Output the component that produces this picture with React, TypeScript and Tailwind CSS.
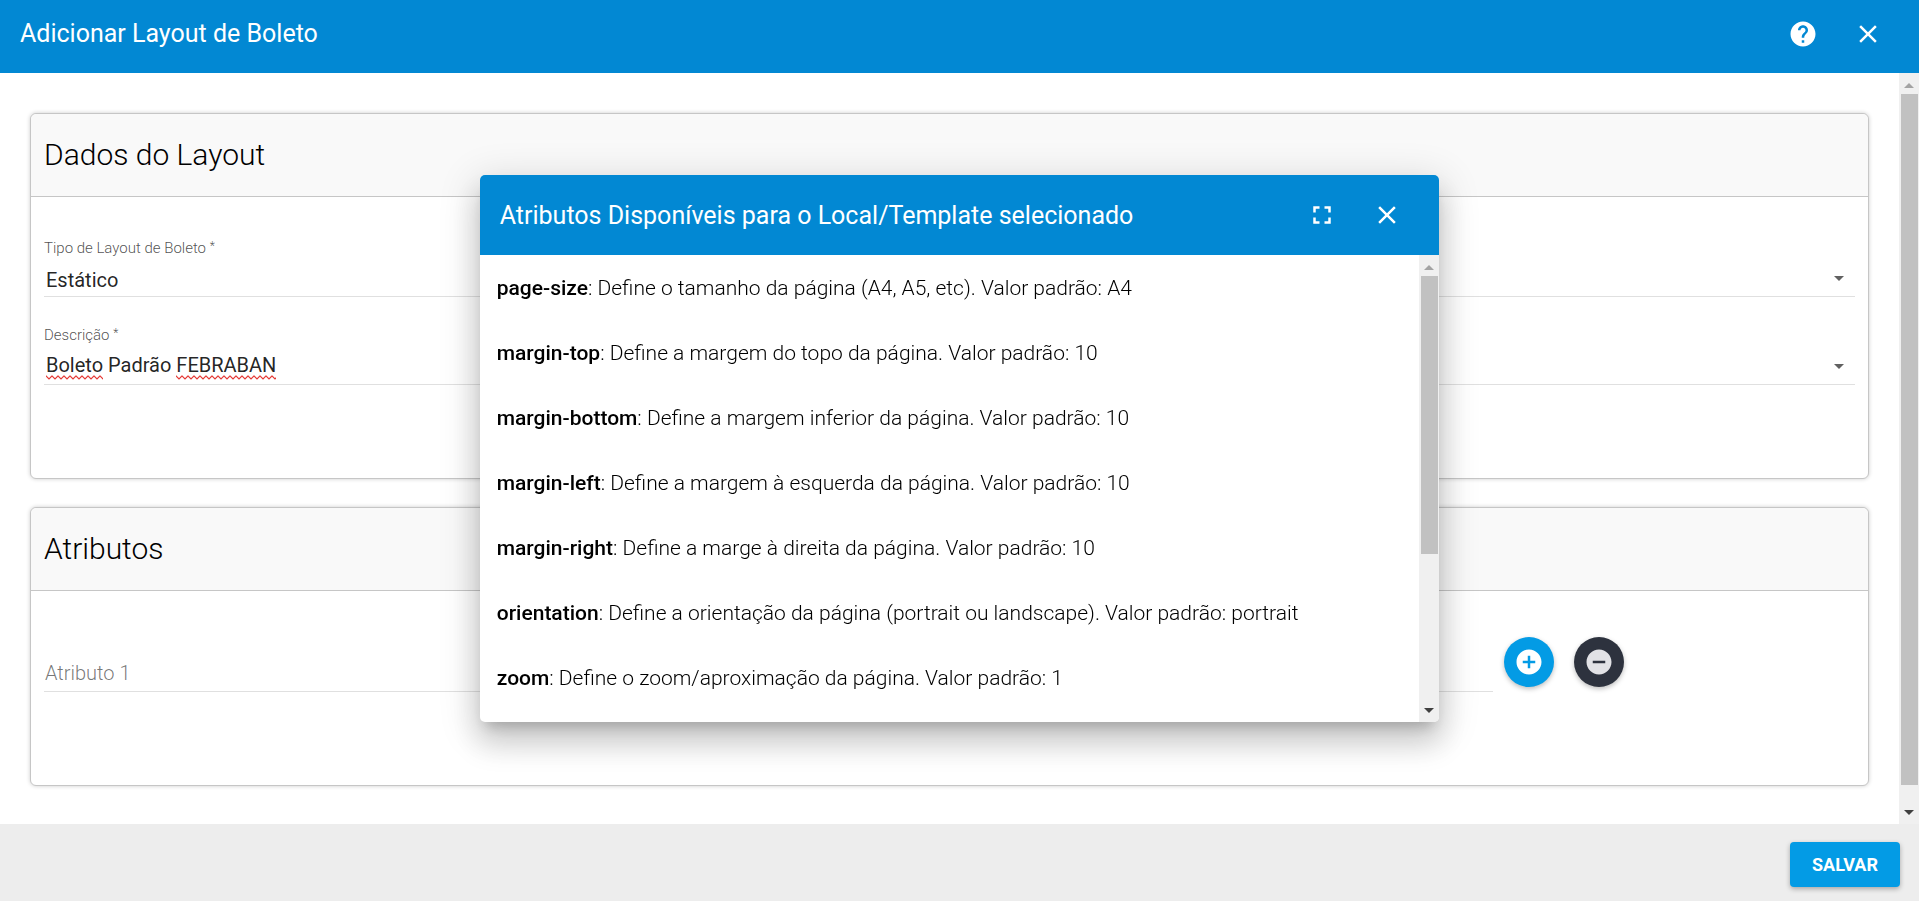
import type { ReactNode } from 'react';
import { clsx } from 'clsx';
import { MdAddCircle, MdClose, MdFullscreen, MdHelp, MdRemoveCircle } from 'react-icons/md';

const ATTRIBUTES = [
    { name: 'page-size', description: 'Define o tamanho da página (A4, A5, etc). Valor padrão: A4' },
    { name: 'margin-top', description: 'Define a margem do topo da página. Valor padrão: 10' },
    { name: 'margin-bottom', description: 'Define a margem inferior da página. Valor padrão: 10' },
    { name: 'margin-left', description: 'Define a margem à esquerda da página. Valor padrão: 10' },
    { name: 'margin-right', description: 'Define a marge à direita da página. Valor padrão: 10' },
    { name: 'orientation', description: 'Define a orientação da página (portrait ou landscape). Valor padrão: portrait' },
    { name: 'zoom', description: 'Define o zoom/aproximação da página. Valor padrão: 1' },
];

interface IconButtonProps {
    label: string;
    className?: string;
    children: ReactNode;
}

const IconButton = ({ label, className, children }: IconButtonProps) => (
    <button
        type="button"
        aria-label={label}
        className={clsx('flex size-[50px] shrink-0 items-center justify-center rounded-full text-3xl', className)}
    >
        {children}
    </button>
);

const ScrollBar = ({ thumbClass }: { thumbClass: string }) => (
    <div aria-hidden="true" className="flex w-5 shrink-0 flex-col items-center bg-[#f0f0f0]">
        <div className="flex h-[21px] w-full items-center justify-center pt-1">
            <div className="border-x-5 border-b-5 border-x-transparent border-b-[#a3a3a3]" />
        </div>
        <div className="flex w-[17px] flex-1 flex-col">
            <div className={clsx('bg-[#c1c1c1]', thumbClass)} />
        </div>
        <div className="flex h-[22px] w-full items-center justify-center pb-0.5">
            <div className="border-x-5 border-t-5 border-x-transparent border-t-[#404040]" />
        </div>
    </div>
);

const Panel = ({ title, children }: { title: string; children: ReactNode }) => (
    <section className="rounded-md border border-[#c6c6c6] bg-white shadow-[0_0_4px_rgba(0,0,0,0.2)]">
        <h2 className="rounded-t-md border-b border-[#c6c6c6] bg-[#f9f9f9] px-[13px] py-[21px] text-[30px] leading-10 font-light text-black">
            {title}
        </h2>
        <div className="px-[13px]">{children}</div>
    </section>
);

const FieldLabel = ({ htmlFor, text }: { htmlFor: string; text: string }) => (
    <label htmlFor={htmlFor} className="block h-5 text-[15px] leading-5 font-light text-black/70">
        {text} <span className="align-[3px] text-xs">*</span>
    </label>
);

interface SelectFieldProps {
    id: string;
    label?: string;
    ariaLabel?: string;
    options: string[];
}

const SelectField = ({ id, label, ariaLabel, options }: SelectFieldProps) => (
    <div className="relative flex-1">
        {label && <FieldLabel htmlFor={id} text={label} />}
        <select
            id={id}
            aria-label={ariaLabel}
            className="block h-[39px] w-full appearance-none border-b border-black/12 bg-transparent pt-1.5 pl-0.5 text-xl outline-none"
        >
            {options.map((option) => (
                <option key={option}>{option}</option>
            ))}
        </select>
        <span
            aria-hidden="true"
            className="pointer-events-none absolute right-[11px] bottom-4 border-x-5 border-t-5 border-x-transparent border-t-[#616161]"
        />
    </div>
);

const Squiggle = ({ id, className }: { id: string; className: string }) => (
    <svg aria-hidden="true" className={clsx('pointer-events-none absolute bottom-[5px] h-[5px]', className)}>
        <pattern id={id} width="6" height="5" patternUnits="userSpaceOnUse">
            <path d="M-1 0 L0 1 L3 4 L6 1 L7 0" fill="none" stroke="#e53935" strokeWidth="1.2" />
        </pattern>
        <rect width="100%" height="5" fill={`url(#${id})`} />
    </svg>
);

const AttributesDialog = () => (
    <div className="fixed inset-0 flex items-start justify-center pt-[175px]">
        <div
            role="dialog"
            aria-labelledby="dialog-title"
            className="w-1/2 overflow-hidden rounded-[5px] bg-white shadow-[0_10px_13px_-6px_rgba(0,0,0,0.2),0_20px_30px_3px_rgba(0,0,0,0.14),0_8px_38px_6px_rgba(0,0,0,0.12)]"
        >
            <header className="flex h-20 items-center gap-[15px] bg-[#0288d3] pr-[27px] pl-5 text-white">
                <h2 id="dialog-title" className="flex-1 pt-0.5 text-[25px]">
                    Atributos Disponíveis para o Local/Template selecionado
                </h2>
                <IconButton label="Tela cheia">
                    <MdFullscreen />
                </IconButton>
                <IconButton label="Fechar atributos">
                    <MdClose />
                </IconButton>
            </header>
            <div className="flex">
                <div className="flex-1 pt-px pb-[11px] pl-[17px]">
                    {ATTRIBUTES.map(({ name, description }) => (
                        <p key={name} className="text-[21px] leading-[65px] font-light text-black">
                            <b className="font-medium">{name}</b>: {description}
                        </p>
                    ))}
                </div>
                <ScrollBar thumbClass="h-[278px]" />
            </div>
        </div>
    </div>
);

export default function App() {
    return (
        <div className="flex min-h-screen flex-col bg-white font-[Roboto,sans-serif] text-black/87">
            <header className="flex h-[73px] items-center gap-[15px] bg-[#0288d3] pr-[26px] pb-1.5 pl-5 text-white">
                <h1 className="flex-1 pt-px text-[25px]">Adicionar Layout de Boleto</h1>
                <IconButton label="Ajuda">
                    <MdHelp />
                </IconButton>
                <IconButton label="Fechar">
                    <MdClose />
                </IconButton>
            </header>

            <div className="flex flex-1">
                <main className="flex-1 space-y-7 px-[30px] pt-10">
                    <Panel title="Dados do Layout">
                        <div className="pt-[41px] pb-[93px]">
                            <SelectField id="layout-type" label="Tipo de Layout de Boleto" options={['Estático']} />
                            <div className="mt-7 flex items-end gap-5">
                                <div className="relative flex-1">
                                    <FieldLabel htmlFor="description" text="Descrição" />
                                    <input
                                        id="description"
                                        type="text"
                                        spellCheck={false}
                                        defaultValue="Boleto Padrão FEBRABAN"
                                        className="block h-10 w-full border-b border-black/12 pt-px pl-0.5 text-xl outline-none"
                                    />
                                    <Squiggle id="squiggle-boleto" className="left-0.5 w-[57px]" />
                                    <Squiggle id="squiggle-febraban" className="left-[132px] w-[100px]" />
                                </div>
                                <SelectField id="layout-template" ariaLabel="Local/Template" options={['']} />
                            </div>
                        </div>
                    </Panel>

                    <Panel title="Atributos">
                        <div className="flex items-start pt-[46px] pb-[93px]">
                            <div className="flex w-4/5 gap-5 pt-2">
                                <input
                                    type="text"
                                    aria-label="Atributo 1"
                                    placeholder="Atributo 1"
                                    className="h-[47px] flex-1 border-b border-black/12 pt-2.5 pl-px text-xl font-light outline-none placeholder:text-black/54"
                                />
                                <input
                                    type="text"
                                    aria-label="Valor 1"
                                    className="h-[47px] flex-1 border-b border-black/12 text-xl outline-none"
                                />
                            </div>
                            <div className="flex gap-5 pl-[11px]">
                                <IconButton
                                    label="Adicionar atributo"
                                    className="bg-[#039be5] text-white shadow-[0_2px_5px_rgba(0,0,0,0.26)]"
                                >
                                    <MdAddCircle />
                                </IconButton>
                                <IconButton
                                    label="Remover atributo"
                                    className="bg-[#2d323e] text-[#e2e2e6] shadow-[0_2px_5px_rgba(0,0,0,0.26)]"
                                >
                                    <MdRemoveCircle />
                                </IconButton>
                            </div>
                        </div>
                    </Panel>
                </main>
                <ScrollBar thumbClass="h-[691px]" />
            </div>

            <footer className="flex h-[77px] items-center justify-end bg-[#ededed] pt-1 pr-[19px]">
                <button
                    type="button"
                    className="h-[45px] w-[110px] rounded-[4px] bg-[#039be5] text-lg font-bold text-white shadow-[0_2px_5px_rgba(0,0,0,0.3)]"
                >
                    SALVAR
                </button>
            </footer>

            <AttributesDialog />
        </div>
    );
}
